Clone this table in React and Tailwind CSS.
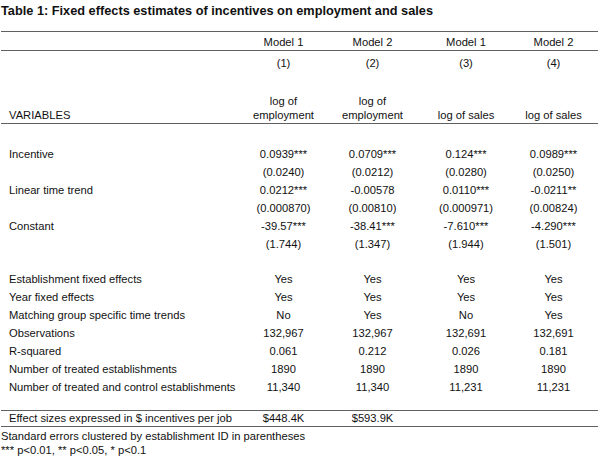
const cols = "grid grid-cols-[244px_79px_99px_88px_87px]";

const coefRows = [
  ["Incentive", "0.0939***", "0.0709***", "0.124***", "0.0989***"],
  ["", "(0.0240)", "(0.0212)", "(0.0280)", "(0.0250)"],
  ["Linear time trend", "0.0212***", "-0.00578", "0.0110***", "-0.0211**"],
  ["", "(0.000870)", "(0.00810)", "(0.000971)", "(0.00824)"],
  ["Constant", "-39.57***", "-38.41***", "-7.610***", "-4.290***"],
  ["", "(1.744)", "(1.347)", "(1.944)", "(1.501)"],
];

const statRows = [
  ["Establishment fixed effects", "Yes", "Yes", "Yes", "Yes"],
  ["Year fixed effects", "Yes", "Yes", "Yes", "Yes"],
  ["Matching group specific time trends", "No", "Yes", "No", "Yes"],
  ["Observations", "132,967", "132,967", "132,691", "132,691"],
  ["R-squared", "0.061", "0.212", "0.026", "0.181"],
  ["Number of treated establishments", "1890", "1890", "1890", "1890"],
  ["Number of treated and control establishments", "11,340", "11,340", "11,231", "11,231"],
];

function Row({ cells }) {
  return (
    <div className={`${cols} h-[18px] leading-[18px]`}>
      <div className="pl-[9px]">{cells[0]}</div>
      {cells.slice(1).map((c, i) => (
        <div key={i} className="text-center">
          {c}
        </div>
      ))}
    </div>
  );
}

function Rule() {
  return <div className="h-px w-[597px] ml-px bg-[#606060]" />;
}

export default function App() {
  return (
    <div className="w-[600px] h-[464px] bg-white text-[#111] text-[11.2px] font-['Liberation_Sans',Arial,sans-serif] overflow-hidden">
      <div className="h-[31px] pl-px pt-[3px] leading-[15px] font-bold text-[12.75px]">
        Table 1: Fixed effects estimates of incentives on employment and sales
      </div>
      <Rule />
      <div className={`${cols} h-[18px] leading-[18px] pt-px`}>
        <div />
        <div className="text-center">Model 1</div>
        <div className="text-center">Model 2</div>
        <div className="text-center">Model 1</div>
        <div className="text-center">Model 2</div>
      </div>
      <Rule />
      <div className={`${cols} h-[21px] leading-[18px] pt-[3px]`}>
        <div />
        <div className="text-center">(1)</div>
        <div className="text-center">(2)</div>
        <div className="text-center">(3)</div>
        <div className="text-center">(4)</div>
      </div>
      <div className={`${cols} h-[51px] leading-[14px] items-end pb-[1px]`}>
        <div className="pl-[9px]">VARIABLES</div>
        <div className="text-center">log of<br />employment</div>
        <div className="text-center">log of<br />employment</div>
        <div className="text-center">log of sales</div>
        <div className="text-center">log of sales</div>
      </div>
      <Rule />
      <div className="h-[21px]" />
      {coefRows.map((r, i) => (
        <Row key={i} cells={r} />
      ))}
      <div className="h-[17px]" />
      {statRows.map((r, i) => (
        <Row key={i} cells={r} />
      ))}
      <div className="h-[14px]" />
      <Rule />
      <div className={`${cols} h-[15px] leading-[15px]`}>
        <div className="pl-[9px]">Effect sizes expressed in $ incentives per job</div>
        <div className="text-center">$448.4K</div>
        <div className="text-center">$593.9K</div>
        <div />
        <div />
      </div>
      <Rule />
      <div className="pl-px pt-[2px] leading-[14px]">
        <div>Standard errors clustered by establishment ID in parentheses</div>
        <div>*** p&lt;0.01, ** p&lt;0.05, * p&lt;0.1</div>
      </div>
    </div>
  );
}
